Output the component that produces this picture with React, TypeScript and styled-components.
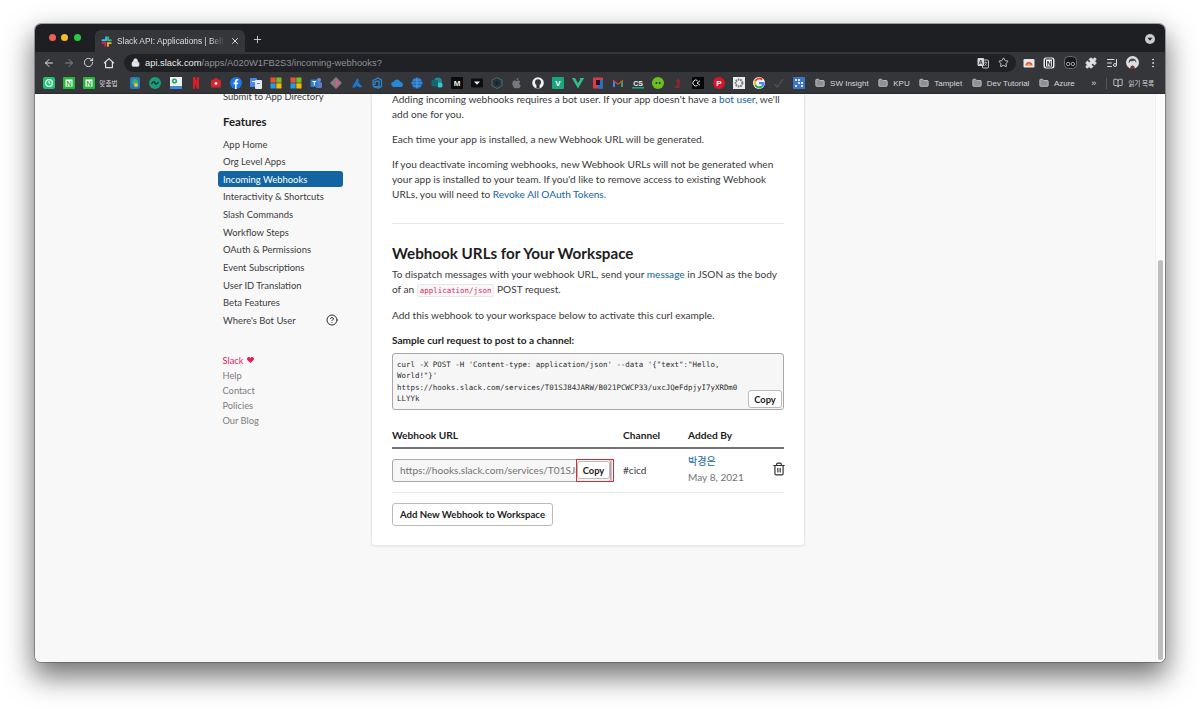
import React from "react";
import styled, { createGlobalStyle } from "styled-components";
import {
  ArrowLeft,
  ArrowRight,
  RotateCw,
  Lock,
  Star,
  Puzzle,
  ListMusic,
  EllipsisVertical,
  Plus,
  X,
  CircleHelp,
  Trash2,
  Folder,
  BookOpen,
} from "lucide-react";

const GlobalStyle = createGlobalStyle`
  html, body { margin: 0; padding: 0; background: #fff; }
  body { font-family: "Lato", "Noto Sans CJK KR", sans-serif; overflow: hidden; }
  * { box-sizing: border-box; }
`;

const Stage = styled.div`
  width: 1200px;
  height: 709px;
  padding: 24px 35px 47px;
`;

const Win = styled.div`
  height: 638px;
  border-radius: 6px;
  overflow: hidden;
  display: flex;
  flex-direction: column;
  background: #f8f8f8;
  box-shadow: 0 0 0 1px rgba(70, 70, 70, 0.45), 0 13px 28px 2px rgba(0, 0, 0, 0.55);
`;

const TabStrip = styled.div`
  height: 28px;
  flex: none;
  background: #1e1f22;
  display: flex;
  align-items: flex-end;
  padding: 0 10px 0 13.5px;
  color: #d8d9db;
  font-family: "Liberation Sans", sans-serif;
`;

const Lights = styled.div`
  display: flex;
  gap: 5.5px;
  align-self: center;
  margin-right: 14.5px;
  margin-top: -2px;
`;

const Light = styled.span<{ $color: string }>`
  width: 7px;
  height: 7px;
  border-radius: 50%;
  background: ${(p) => p.$color};
`;

const Tab = styled.div`
  width: 150px;
  height: 22px;
  background: #35363a;
  border-radius: 6px 6px 0 0;
  display: flex;
  align-items: center;
  padding: 0 5px 0 6px;
  gap: 5px;
`;

const TabTitle = styled.span`
  flex: 1;
  font-size: 8.4px;
  white-space: nowrap;
  overflow: hidden;
  color: #dcdde0;
  -webkit-mask-image: linear-gradient(to right, #000 86%, transparent);
  mask-image: linear-gradient(to right, #000 86%, transparent);
`;

const NewTab = styled.span`
  display: flex;
  align-self: center;
  margin: 2px 0 0 7px;
  color: #d4d5d7;
`;

const StripEnd = styled.span`
  margin-left: auto;
  align-self: center;
  margin-top: 2px;
  display: flex;
`;

const Toolbar = styled.div`
  height: 21px;
  flex: none;
  background: #35363a;
  display: flex;
  align-items: center;
  padding: 0 9px 0 8px;
  color: #d9dadc;
`;

const NavButtons = styled.div`
  display: flex;
  width: 81px;
  gap: 8.2px;
  flex: none;
`;

const NavIcon = styled.span<{ $dim?: boolean }>`
  display: flex;
  color: ${(p) => (p.$dim ? "#85868a" : "#dfe0e2")};
`;

const Omnibox = styled.div`
  width: 892px;
  height: 18px;
  flex: none;
  border-radius: 9px;
  background: #202124;
  display: flex;
  align-items: center;
  padding: 0 7px 0 7px;
  font-family: "Liberation Sans", sans-serif;
  font-size: 9.35px;
  color: #8e9094;
`;

const UrlHost = styled.span`
  color: #e7e8ea;
`;

const Url = styled.span`
  margin-left: 5px;
  flex: 1;
`;

const OmniTools = styled.div`
  display: flex;
  gap: 9px;
  color: #d3d4d6;
`;

const Extensions = styled.div`
  display: flex;
  align-items: center;
  gap: 8.4px;
  margin-left: 7px;
  color: #dcdde0;
`;

const BookmarkBar = styled.div`
  height: 21px;
  flex: none;
  background: #35363a;
  border-bottom: 1px solid #2a2b2e;
  display: flex;
  align-items: center;
  padding-left: 4px;
  font-family: "Liberation Sans", sans-serif;
  font-size: 8px;
  color: #d7d8da;
  white-space: nowrap;
`;

const FavSlot = styled.span`
  width: 20.12px;
  flex: none;
  display: flex;
  justify-content: center;
`;

const KoLabel = styled.span`
  width: 26px;
  flex: none;
  font-family: "Noto Sans CJK KR", sans-serif;
  font-size: 6.6px;
`;

const FolderItem = styled.span`
  display: flex;
  align-items: center;
  gap: 5px;
  margin-left: 6px;
  margin-right: 3.5px;
`;

const OverflowMark = styled.span`
  margin-left: 13px;
  width: 15px;
  font-size: 9px;
`;

const BarDivider = styled.span`
  width: 1px;
  height: 11px;
  background: #55565a;
  margin-right: 6px;
`;

const ReadingList = styled.span`
  display: flex;
  align-items: center;
  gap: 5px;
  font-family: "Noto Sans CJK KR", sans-serif;
  font-size: 6.6px;
`;

const Viewport = styled.div`
  flex: 1;
  min-height: 0;
  position: relative;
  overflow: hidden;
  background: #f8f8f8;
`;

const ScrollTrack = styled.div`
  position: absolute;
  right: 0;
  top: 0;
  bottom: 0;
  width: 10px;
  background: #fbfbfb;
  border-left: 1px solid #efefef;
`;

const ScrollThumb = styled.div`
  position: absolute;
  right: 2px;
  top: 166px;
  bottom: 2px;
  width: 5px;
  border-radius: 3px;
  background: #bebebe;
`;

const Page = styled.div`
  display: flex;
  margin-top: -8px;
  padding-left: 183px;
  color: #1d1c1d;
`;

const Sidebar = styled.nav`
  width: 153px;
  flex: none;
  font-size: 9.43px;
  padding-top: 3px;
`;

const NavLink = styled.div<{ $active?: boolean }>`
  height: 15.7px;
  margin-bottom: 1.95px;
  border-radius: 3px;
  padding: 0 5px;
  width: 125px;
  display: flex;
  align-items: center;
  justify-content: space-between;
  color: ${(p) => (p.$active ? "#fff" : "#3c3b3d")};
  background: ${(p) => (p.$active ? "#1264a3" : "transparent")};
`;

const NavHeading = styled.h4`
  margin: 9px 0 7.5px 5px;
  font-size: 11.4px;
  line-height: 15px;
  font-weight: 700;
  color: #1d1c1d;
`;

const FootLinks = styled.div`
  margin: 24.5px 0 0 4.5px;
  font-size: 9.3px;
  line-height: 15.2px;
  color: #7c7c7e;
`;

const SlackLove = styled.div`
  color: #e01e5a;
  display: flex;
  align-items: center;
  gap: 4px;
`;

const Card = styled.main`
  width: 434px;
  height: 460px;
  flex: none;
  background: #fff;
  border: 1px solid #e8e8e8;
  border-radius: 4px;
  box-shadow: 0 1px 2px rgba(0, 0, 0, 0.05);
  padding: 5px 20px 0;
  font-size: 10.1px;
  line-height: 15px;
  color: #3a393b;
`;

const Para = styled.p`
  margin: 0 0 10px;
`;

const A = styled.a`
  color: #1264a3;
`;

const Rule = styled.hr`
  border: 0;
  border-top: 1px solid #e8e8e8;
  margin: 21px 0 19px;
`;

const H2 = styled.h2`
  margin: 0 0 4px;
  font-size: 15.2px;
  line-height: 20px;
  font-weight: 700;
  color: #1d1c1d;
`;

const InlineCode = styled.code`
  font-family: "DejaVu Sans Mono", monospace;
  font-size: 7.45px;
  color: #e01e5a;
  background: #f8f8f8;
  border: 1px solid #e8e8e8;
  border-radius: 2px;
  padding: 1px 2px;
`;

const SampleLabel = styled.div`
  font-weight: 700;
  color: #1d1c1d;
  margin: 0 0 5px;
`;

const CodeBox = styled.div`
  position: relative;
  height: 57px;
  border: 1px solid #a8a8a8;
  border-radius: 3px;
  background: #f6f6f6;
  padding: 5px 4px;
  font-family: "DejaVu Sans Mono", monospace;
  font-size: 7.45px;
  line-height: 11.3px;
  color: #2c2b2d;
  white-space: pre;
`;

const CopyButton = styled.button`
  position: absolute;
  font-family: "Lato", sans-serif;
  font-size: 9.4px;
  font-weight: 700;
  color: #1d1c1d;
  background: #fff;
  border: 1px solid #bbb;
  border-radius: 3px;
  padding: 0;
  width: 34px;
  height: 18px;
  right: 1px;
  bottom: 1px;
`;

const FieldCopyButton = styled(CopyButton)`
  width: 33px;
  right: 0;
  bottom: auto;
  top: 1px;
`;

const Grid = styled.div`
  display: grid;
  grid-template-columns: 231px 65px 84px 1fr;
`;

const TableHead = styled(Grid)`
  margin-top: 18px;
  height: 21px;
  border-bottom: 2px solid #737373;
  font-weight: 700;
  font-size: 10.2px;
  color: #1d1c1d;
`;

const TableRow = styled(Grid)`
  height: 44px;
  border-bottom: 1px solid #e8e8e8;
  align-items: center;
`;

const FieldWrap = styled.div`
  position: relative;
  width: 223px;
`;

const UrlField = styled.div`
  position: relative;
  width: 219px;
  height: 23px;
  border: 1px solid #a8a8a8;
  border-radius: 3px;
  background: #f6f6f6;
  color: #737373;
  line-height: 21px;
  padding-left: 7px;
  overflow: hidden;
  white-space: nowrap;
`;

const RedMark = styled.span`
  position: absolute;
  left: 184px;
  top: 0;
  width: 38px;
  height: 23px;
  border: 1px solid #e0262f;
  pointer-events: none;

  &::after {
    content: "";
    position: absolute;
    top: 0;
    bottom: 0;
    right: 1px;
    width: 1px;
    background: rgba(224, 38, 47, 0.35);
  }
`;

const ChannelName = styled.div`
  color: #3a393b;
`;

const AddedBy = styled.div`
  color: #737373;
  line-height: 16px;
  margin-top: -3px;
`;

const ActionRow = styled.div`
  margin-top: 10px;
`;

const AddButton = styled.button`
  font-family: "Lato", sans-serif;
  font-size: 9.6px;
  font-weight: 700;
  color: #1d1c1d;
  background: #fff;
  border: 1px solid #bbb;
  border-radius: 3px;
  width: 161px;
  height: 23px;
  padding: 0;
`;

const TrashCell = styled.div`
  display: flex;
  justify-content: flex-end;
  color: #2f2e30;
  padding-bottom: 3px;
  margin-right: 1px;
`;

const SlackLogo = () => (
  <svg width="11" height="11" viewBox="0 0 12 12">
    <rect x="4.6" y="0.4" width="2" height="5" rx="1" fill="#36c5f0" />
    <rect x="0.6" y="3.6" width="5" height="2" rx="1" fill="#36c5f0" />
    <rect x="6.8" y="0.4" width="2" height="5" rx="1" fill="#2eb67d" />
    <rect x="6.8" y="3.6" width="5" height="2" rx="1" fill="#2eb67d" />
    <rect x="6.6" y="6.8" width="5" height="2" rx="1" fill="#ecb22e" />
    <rect x="6.6" y="6.8" width="2" height="5" rx="1" fill="#ecb22e" />
    <rect x="0.6" y="6.8" width="5" height="2" rx="1" fill="#e01e5a" />
    <rect x="3.8" y="6.8" width="2" height="5" rx="1" fill="#e01e5a" />
  </svg>
);

const glyph = (t: string, fill: string, size = 8) => (
  <text x="6" y="9" textAnchor="middle" fontSize={size} fontWeight="700" fontFamily="Liberation Sans" fill={fill}>
    {t}
  </text>
);

const Windows = () => (
  <>
    <rect x="0.5" y="0.5" width="5.2" height="5.2" fill="#e8542e" />
    <rect x="6.3" y="0.5" width="5.2" height="5.2" fill="#7fb81f" />
    <rect x="0.5" y="6.3" width="5.2" height="5.2" fill="#1d9fe2" />
    <rect x="6.3" y="6.3" width="5.2" height="5.2" fill="#f7b90f" />
  </>
);

const favicons: Record<string, React.ReactNode> = {
  clock: (
    <>
      <rect width="12" height="12" rx="2" fill="#1cc46c" />
      <circle cx="6" cy="6" r="3.4" fill="none" stroke="#fff" strokeWidth="1.3" />
      <path d="M6 4v2.2h1.6" stroke="#fff" fill="none" />
    </>
  ),
  naver: (
    <>
      <rect width="12" height="12" rx="1" fill="#25b83b" />
      <rect x="2.5" y="2.5" width="7" height="7" fill="#fff" />
      {glyph("N", "#25b83b", 7.5)}
    </>
  ),
  bird: (
    <>
      <rect x="1" width="10" height="12" rx="2" fill="#2b78b8" />
      <circle cx="6" cy="5" r="3" fill="#36b070" />
      <circle cx="7" cy="8" r="2" fill="#e6c53a" />
    </>
  ),
  teal: (
    <>
      <circle cx="6" cy="6" r="6" fill="#1c9c78" />
      <path d="M2.5 7c2-3 3-3 3.5-1s2 1 3.5-1" stroke="#123" fill="none" strokeWidth="1.2" />
    </>
  ),
  maps: (
    <>
      <rect width="12" height="12" fill="#eef2f4" />
      <path d="M0 9h12v3H0z" fill="#3c8ad8" />
      <circle cx="4.5" cy="4" r="2.6" fill="#1ea45c" />
      <circle cx="4.5" cy="4" r="1" fill="#fff" />
    </>
  ),
  netflix: <path d="M3 0h2.2l1.6 5V0H9v12l-2.2-.6L5.2 6v5.6L3 12z" fill="#d81f26" />,
  redBag: (
    <>
      <rect x="1" y="2.5" width="10" height="8" rx="1.5" fill="#d7232a" />
      <rect x="4.5" y="1" width="3" height="2" fill="#d7232a" />
      <circle cx="6" cy="6.5" r="1.4" fill="#fff" />
    </>
  ),
  facebook: (
    <>
      <circle cx="6" cy="6" r="6" fill="#1b78e8" />
      <path d="M6.6 12V7.3h1.5l.3-1.7H6.6v-1c0-.6.3-1 1-1h.9V2.2C7 1.9 5 1.9 5 4.3v1.3H3.6v1.7H5V12z" fill="#fff" />
    </>
  ),
  translate: (
    <>
      <rect x="0" y="1" width="7" height="9" rx="1" fill="#4a8af0" />
      <rect x="5" y="3" width="7" height="9" rx="1" fill="#e6e8ea" />
      <rect x="2" y="4" width="3" height="1" fill="#fff" />
      <rect x="7" y="6" width="3" height="1" fill="#4a8af0" />
    </>
  ),
  windows: <Windows />,
  teams: (
    <>
      <circle cx="9" cy="3" r="2" fill="#6f8fd8" />
      <rect x="6" y="5" width="6" height="6" rx="1.5" fill="#5c7cc8" />
      <rect x="0.5" y="2.5" width="7.5" height="7.5" rx="1" fill="#2f7fc8" />
      <path d="M2.4 4.5h3.8M4.3 4.5v4" stroke="#fff" strokeWidth="1" />
    </>
  ),
  diamond: (
    <>
      <path d="M6 0l6 6-6 6-6-6z" fill="#8a7a80" />
      <path d="M6 3l3 3-3 3z" fill="#e05a84" />
    </>
  ),
  azure: <path d="M6.4 1L1 10.5h3l4-7zM7.2 5l-2 4 3 1.2h-4.4h7.7z" fill="#1e78d0" />,
  devops: <path d="M2 3.5l5-2.5 3.5 2v6.5L7 11 2 9.5h6V4L4 4.6v3L2 8z" fill="none" stroke="#2a8ad8" strokeWidth="1.2" />,
  cloud: <path d="M3 10a2.6 2.6 0 0 1-.3-5.2A3.6 3.6 0 0 1 9.4 5 2.5 2.5 0 0 1 9.5 10z" fill="#2488d8" />,
  globe: (
    <>
      <circle cx="6" cy="6" r="5.5" fill="#1a6cc0" />
      <path d="M.5 6h11M6 .5v11M2 3h8M2 9h8" stroke="#6ab0ea" strokeWidth=".7" />
    </>
  ),
  sharepoint: (
    <>
      <circle cx="7" cy="4.5" r="4" fill="#1d8a94" />
      <circle cx="9" cy="8" r="2.6" fill="#37c6d0" />
      <rect x="0.5" y="3" width="6.5" height="6.5" rx="1" fill="#11696f" />
    </>
  ),
  medium: (
    <>
      <rect width="12" height="12" rx="1" fill="#0b0b0c" />
      {glyph("M", "#f1f1f1")}
    </>
  ),
  blackTab: (
    <>
      <rect y="1.5" width="12" height="9" rx="1" fill="#0d0d0f" />
      <path d="M3 4.5h6L6 7.8z" fill="#f0f0f0" />
    </>
  ),
  hex: (
    <>
      <path d="M6 .5l5 2.7v5.6l-5 2.7-5-2.7V3.2z" fill="#24363a" stroke="#4a6c70" />
      <circle cx="6" cy="6" r="2" fill="#17262a" />
    </>
  ),
  apple: (
    <path
      d="M8.3 6.4c0-1.3 1-1.9 1.1-2-.6-.9-1.5-1-1.9-1-.8-.1-1.5.5-1.9.5s-1-.5-1.7-.4c-.9 0-1.7.5-2.1 1.3-.9 1.6-.2 3.9.7 5.2.4.6.9 1.3 1.6 1.3.6 0 .9-.4 1.7-.4s1 .4 1.7.4 1.2-.6 1.6-1.3c.5-.7.7-1.4.7-1.4s-1.5-.6-1.5-2.6zM7 2.4c.3-.4.6-1 .5-1.6-.5 0-1.1.3-1.5.8-.3.4-.6 1-.5 1.5.6 0 1.1-.3 1.5-.7z"
      fill="#77787a"
    />
  ),
  github: (
    <>
      <circle cx="6" cy="6" r="5.8" fill="#f2f2f2" />
      <circle cx="6" cy="5.2" r="3" fill="#35363a" />
      <rect x="4.4" y="7.5" width="3.2" height="4" fill="#35363a" />
    </>
  ),
  vGreen: (
    <>
      <rect width="12" height="12" rx="1" fill="#19a67e" />
      {glyph("V", "#fff")}
    </>
  ),
  vue: (
    <>
      <path d="M0 1h12L6 11.5z" fill="#2fc08a" />
      <path d="M3 1h6L6 6.2z" fill="#35363a" />
      <path d="M7.5 1h4.5L9.5 4z" fill="#2fc08a" />
    </>
  ),
  jetbrains: (
    <>
      <rect x="1" y="0.5" width="10" height="11" fill="#d93a4c" />
      <rect x="6" y="3" width="5" height="8.5" fill="#2a6fc0" />
      <path d="M4 3h4v5H4z" fill="#1c1c1e" />
    </>
  ),
  gmail: (
    <>
      <path d="M1 2.5L6 6.5l5-4V10H9V5.6L6 8 3 5.6V10H1z" fill="#ea4335" />
      <path d="M1 10h2V5.6L1 4z" fill="#4285f4" />
      <path d="M9 10h2V4L9 5.6z" fill="#34a853" />
    </>
  ),
  cs: (
    <>
      {glyph("CS", "#f1f1f1", 7)}
      <rect y="10" width="12" height="1.6" fill="#1aa383" />
    </>
  ),
  limeBall: (
    <>
      <circle cx="6" cy="6" r="6" fill="#6cbf1f" />
      <circle cx="4.4" cy="6" r="1" fill="#234" />
      <circle cx="7.6" cy="6" r="1" fill="#234" />
    </>
  ),
  redArrow: <path d="M6 1l3 4H7.5v6h-5l2-3H5.5V5H3.8z" fill="#8c2a2a" />,
  blackQ: (
    <>
      <rect width="12" height="12" rx="1" fill="#050506" />
      <path d="M8 3.8L5 6l3 2.2M5.5 3.5a3 3 0 1 0 0 5" stroke="#e8e8e8" fill="none" />
    </>
  ),
  pinterest: (
    <>
      <circle cx="6" cy="6" r="6" fill="#d6152b" />
      {glyph("P", "#fff")}
    </>
  ),
  gear: (
    <>
      <rect width="12" height="12" fill="#ebebeb" />
      <circle cx="6" cy="6" r="3.4" fill="none" stroke="#777" strokeWidth="2" strokeDasharray="1.6 .8" />
    </>
  ),
  google: (
    <>
      <circle cx="6" cy="6" r="6" fill="#fff" />
      <path d="M6 2.4a3.6 3.6 0 0 1 2.5 1L10 2A5.5 5.5 0 0 0 1.4 3.5l1.7 1.3A3.4 3.4 0 0 1 6 2.4z" fill="#ea4335" />
      <path d="M1.4 3.5a5.5 5.5 0 0 0 0 5l1.7-1.3a3.4 3.4 0 0 1 0-2.4z" fill="#fbbc05" />
      <path d="M1.4 8.5A5.5 5.5 0 0 0 10 10L8.3 8.6A3.4 3.4 0 0 1 3.1 7.2z" fill="#34a853" />
      <path d="M11.4 5H6v2.2h3a2.6 2.6 0 0 1-.7 1.4L10 10a5.6 5.6 0 0 0 1.4-5z" fill="#4285f4" />
    </>
  ),
  tick: <path d="M1.5 7l2.5 3 6-8" stroke="#55565a" strokeWidth="1.1" fill="none" />,
  blueGrid: (
    <>
      <rect width="12" height="12" fill="#3b74c4" />
      <path d="M2 2h2v2H2zM5 2h2v2H5zM8 5h2v2H8zM2 8h2v2H2zM5 5h2v2H5zM8 8h2v2H8z" fill="#d8e6f6" />
    </>
  ),
};

const Favicon = ({ name }: { name: string }) => (
  <FavSlot>
    <svg width="12" height="12" viewBox="0 0 12 12">
      {favicons[name]}
    </svg>
  </FavSlot>
);

const afterLabel = [
  "bird", "teal", "maps", "netflix", "redBag", "facebook", "translate", "windows", "windows",
  "teams", "diamond", "azure", "devops", "cloud", "globe", "sharepoint", "medium", "blackTab",
  "hex", "apple", "github", "vGreen", "vue", "jetbrains", "gmail", "cs", "limeBall", "redArrow",
  "blackQ", "pinterest", "gear", "google", "tick", "blueGrid",
];

const folders = ["SW Insight", "KPU", "Tamplet", "Dev Tutorial", "Azure"];

const featureLinks = [
  "App Home",
  "Org Level Apps",
  "Incoming Webhooks",
  "Interactivity & Shortcuts",
  "Slash Commands",
  "Workflow Steps",
  "OAuth & Permissions",
  "Event Subscriptions",
  "User ID Translation",
  "Beta Features",
];

const curlText = `curl -X POST -H 'Content-type: application/json' --data '{"text":"Hello,
World!"}'
https://hooks.slack.com/services/T01SJ84JARW/B021PCWCP33/uxcJQeFdpjyI7yXRDm0
LLYYk`;

const HomeIcon = () => (
  <svg width="12" height="12" viewBox="0 0 12 12" fill="none" stroke="currentColor" strokeWidth="1.2" strokeLinejoin="round">
    <path d="M1 6.2 6 1.6l5 4.6M2.6 5v5.6h6.8V5" />
  </svg>
);

const TranslateIcon = () => (
  <svg width="12" height="12" viewBox="0 0 12 12">
    <rect x="0.5" y="1" width="6.5" height="8" rx="1" fill="#d6d7d9" />
    <rect x="5.5" y="3" width="6" height="8" rx="1" fill="none" stroke="#d6d7d9" strokeWidth=".9" />
    <path d="M2 7.4 3.7 3l1.7 4.4M2.7 6h2" stroke="#2a2b2e" strokeWidth=".8" fill="none" />
    <path d="M7 5.4h3.2M8.6 4.6v.8M9.8 5.4c-.3 1.6-1.2 2.6-2.6 3.2M7.6 6.2c.4 1.1 1.2 1.9 2.4 2.4" stroke="#d6d7d9" strokeWidth=".6" fill="none" />
  </svg>
);

const TabMenuIcon = () => (
  <svg width="10" height="10" viewBox="0 0 10 10">
    <circle cx="5" cy="5" r="5" fill="#c9cacc" />
    <path d="M2.6 3.8h4.8L5 6.8z" fill="#1e1f22" />
  </svg>
);

const StoreExtension = () => (
  <svg width="12" height="12" viewBox="0 0 12 12">
    <rect x="0.5" y="2" width="11" height="8.5" rx="1.2" fill="#e6e7e9" />
    <path d="M2.5 8.5c0-2.2 1.4-3.6 3.5-3.6s3.5 1.4 3.5 3.6z" fill="#e2533f" />
    <path d="M4.2 8.5c0-1.2.7-2 1.8-2s1.8.8 1.8 2z" fill="#f2b632" />
  </svg>
);

const NotionExtension = () => (
  <svg width="12" height="12" viewBox="0 0 12 12">
    <rect x="0.5" y="0.5" width="11" height="11" rx="2.5" fill="#e9e9ea" />
    <rect x="2.5" y="2" width="7" height="8" rx=".6" fill="#fff" stroke="#202022" />
    {glyph("N", "#202022", 6.5)}
  </svg>
);

const GlassesExtension = () => (
  <svg width="13" height="13" viewBox="0 0 13 13">
    <rect x="0.5" y="0.5" width="12" height="12" rx="4" fill="#18191b" stroke="#6c6d70" />
    <circle cx="4.2" cy="8" r="1.7" fill="none" stroke="#a9aaad" />
    <circle cx="8.8" cy="8" r="1.7" fill="none" stroke="#a9aaad" />
  </svg>
);

const Avatar = () => (
  <svg width="13" height="13" viewBox="0 0 13 13">
    <circle cx="6.5" cy="6.5" r="6.5" fill="#dfdfe0" />
    <path d="M2.6 7c0-3 1.6-4.4 3.9-4.4s3.9 1.4 3.9 4.4c-1-.7-1.4-2-2-2.4-1.4.7-2.8.7-3.8.3-.7.5-1 1.6-2 2.1z" fill="#4a4a4d" />
    <path d="M4 13c.2-2.6 1.2-3.6 2.5-3.6S8.800 10.400 9 13z" fill="#6c3a3a" />
  </svg>
);

const App = () => (
  <Stage>
    <GlobalStyle />
    <Win>
      <TabStrip>
        <Lights>
          <Light $color="#ed5f57" />
          <Light $color="#f4bd2f" />
          <Light $color="#2ac940" />
        </Lights>
        <Tab>
          <SlackLogo />
          <TabTitle>Slack API: Applications | Belf Slack</TabTitle>
          <X size={10} strokeWidth={2.2} color="#e8e8ea" />
        </Tab>
        <NewTab>
          <Plus size={11} strokeWidth={2} />
        </NewTab>
        <StripEnd>
          <TabMenuIcon />
        </StripEnd>
      </TabStrip>
      <Toolbar>
        <NavButtons>
          <NavIcon><ArrowLeft size={12} /></NavIcon>
          <NavIcon $dim><ArrowRight size={12} /></NavIcon>
          <NavIcon><RotateCw size={11} /></NavIcon>
          <NavIcon><HomeIcon /></NavIcon>
        </NavButtons>
        <Omnibox>
          <Lock size={9} fill="#e7e8ea" color="#e7e8ea" />
          <Url>
            <UrlHost>api.slack.com</UrlHost>/apps/A020W1FB2S3/incoming-webhooks?
          </Url>
          <OmniTools>
            <TranslateIcon />
            <Star size={11} />
          </OmniTools>
        </Omnibox>
        <Extensions>
          <StoreExtension />
          <NotionExtension />
          <GlassesExtension />
          <Puzzle size={12} fill="#e0e1e3" />
          <ListMusic size={12} />
          <Avatar />
          <EllipsisVertical size={12} />
        </Extensions>
      </Toolbar>
      <BookmarkBar>
        <Favicon name="clock" />
        <Favicon name="naver" />
        <Favicon name="naver" />
        <KoLabel>맞춤법</KoLabel>
        {afterLabel.map((name, i) => (
          <Favicon key={i} name={name} />
        ))}
        {folders.map((f) => (
          <FolderItem key={f}>
            <Folder size={10} fill="#8f9094" color="#c8c9cb" />
            {f}
          </FolderItem>
        ))}
        <OverflowMark>»</OverflowMark>
        <BarDivider />
        <ReadingList>
          <BookOpen size={10} />
          읽기 목록
        </ReadingList>
      </BookmarkBar>
      <Viewport>
        <Page>
          <Sidebar>
            <NavLink>Submit to App Directory</NavLink>
            <NavHeading>Features</NavHeading>
            {featureLinks.map((label) => (
              <NavLink key={label} $active={label === "Incoming Webhooks"}>
                {label}
              </NavLink>
            ))}
            <NavLink>
              Where's Bot User
              <CircleHelp size={12} color="#2c2b2d" />
            </NavLink>
            <FootLinks>
              <SlackLove>
                Slack
                <svg width="7" height="6" viewBox="0 0 7 6">
                  <path d="M3.5 6 .4 3C-.6 1.800.4 0 1.800 0c.8 0 1.400.4 1.700 1 .3-.6.9-1 1.700-1 1.400 0 2.400 1.800 1.400 3z" fill="#e01e5a" />
                </svg>
              </SlackLove>
              <div>Help</div>
              <div>Contact</div>
              <div>Policies</div>
              <div>Our Blog</div>
            </FootLinks>
          </Sidebar>
          <Card>
            <Para>
              Adding incoming webhooks requires a bot user. If your app doesn't have a <A>bot user</A>, we'll
              add one for you.
            </Para>
            <Para>Each time your app is installed, a new Webhook URL will be generated.</Para>
            <Para>
              If you deactivate incoming webhooks, new Webhook URLs will not be generated when your app is
              installed to your team. If you'd like to remove access to existing Webhook URLs, you will need
              to <A>Revoke All OAuth Tokens.</A>
            </Para>
            <Rule />
            <H2>Webhook URLs for Your Workspace</H2>
            <Para>
              To dispatch messages with your webhook URL, send your <A>message</A> in JSON as the body of an{" "}
              <InlineCode>application/json</InlineCode> POST request.
            </Para>
            <Para>Add this webhook to your workspace below to activate this curl example.</Para>
            <SampleLabel>Sample curl request to post to a channel:</SampleLabel>
            <CodeBox>
              {curlText}
              <CopyButton>Copy</CopyButton>
            </CodeBox>
            <TableHead>
              <div>Webhook URL</div>
              <div>Channel</div>
              <div>Added By</div>
            </TableHead>
            <TableRow>
              <FieldWrap>
                <UrlField>
                  https://hooks.slack.com/services/T01SJ84JARW
                  <FieldCopyButton>Copy</FieldCopyButton>
                </UrlField>
                <RedMark />
              </FieldWrap>
              <ChannelName>#cicd</ChannelName>
              <AddedBy>
                <A>박경은</A>
                <div>May 8, 2021</div>
              </AddedBy>
              <TrashCell>
                <Trash2 size={14} />
              </TrashCell>
            </TableRow>
            <ActionRow>
              <AddButton>Add New Webhook to Workspace</AddButton>
            </ActionRow>
          </Card>
        </Page>
        <ScrollTrack />
        <ScrollThumb />
      </Viewport>
    </Win>
  </Stage>
);

export default App;
